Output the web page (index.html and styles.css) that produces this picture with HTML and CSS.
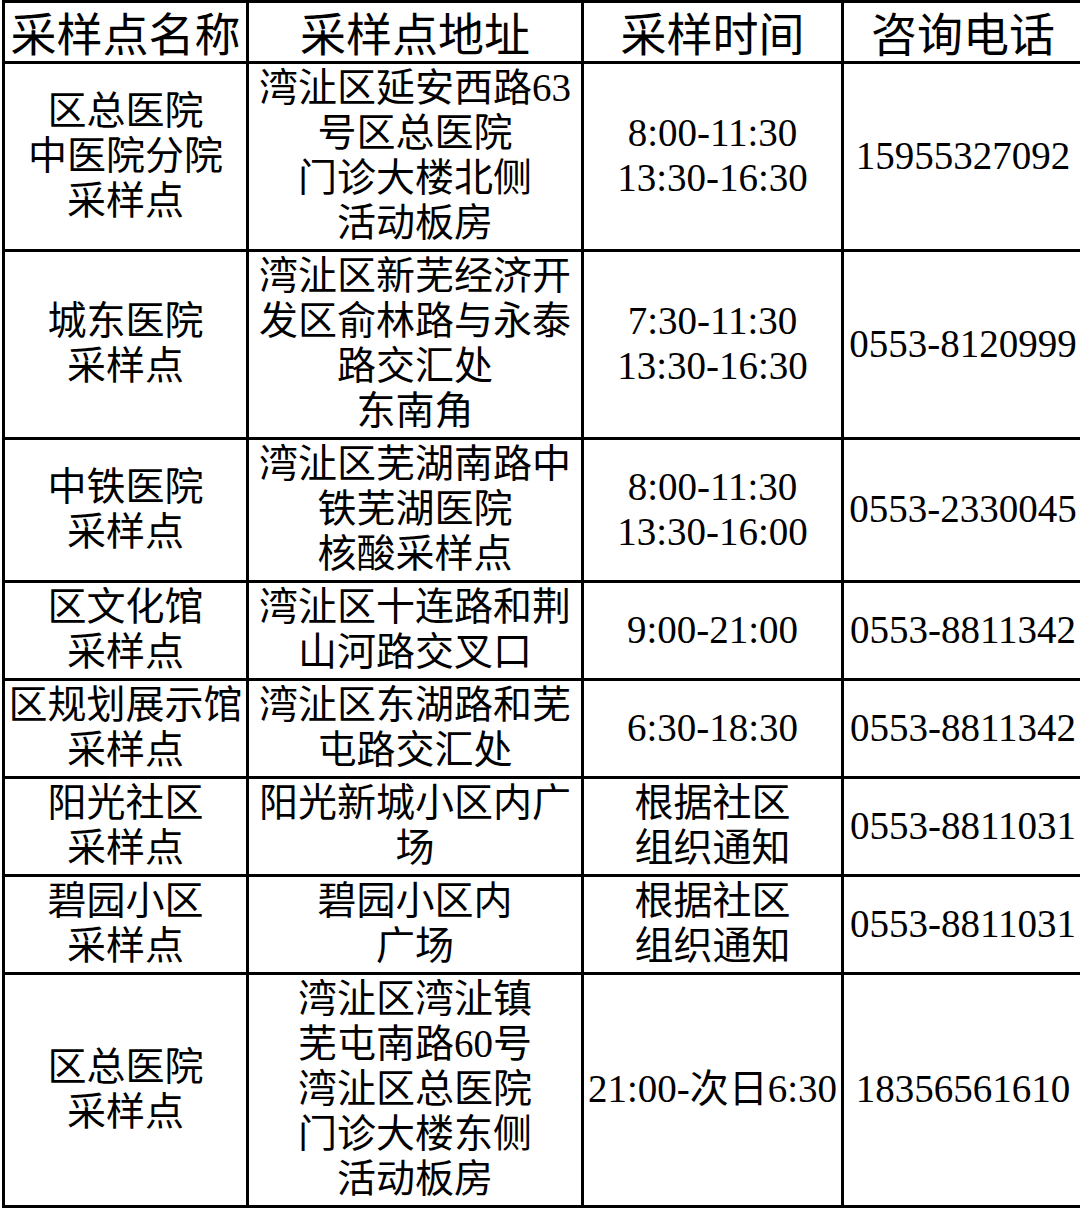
FILE: index.html
```html
<!DOCTYPE html>
<html lang="zh-CN">
<head>
<meta charset="utf-8">
<title>采样点</title>
<link rel="stylesheet" href="styles.css">
</head>
<body>
<table class="sites">
  <colgroup>
    <col class="c-name">
    <col class="c-addr">
    <col class="c-time">
    <col class="c-tel">
  </colgroup>
  <thead>
    <tr><th>采样点名称</th><th>采样点地址</th><th>采样时间</th><th>咨询电话</th></tr>
  </thead>
  <tbody>
    <tr>
      <td>区总医院<br>中医院分院<br>采样点</td>
      <td>湾沚区延安西路63<br>号区总医院<br>门诊大楼北侧<br>活动板房</td>
      <td>8:00-11:30<br>13:30-16:30</td>
      <td>15955327092</td>
    </tr>
    <tr>
      <td>城东医院<br>采样点</td>
      <td>湾沚区新芜经济开<br>发区俞林路与永泰<br>路交汇处<br>东南角</td>
      <td>7:30-11:30<br>13:30-16:30</td>
      <td>0553-8120999</td>
    </tr>
    <tr>
      <td>中铁医院<br>采样点</td>
      <td>湾沚区芜湖南路中<br>铁芜湖医院<br>核酸采样点</td>
      <td>8:00-11:30<br>13:30-16:00</td>
      <td>0553-2330045</td>
    </tr>
    <tr>
      <td>区文化馆<br>采样点</td>
      <td>湾沚区十连路和荆<br>山河路交叉口</td>
      <td>9:00-21:00</td>
      <td>0553-8811342</td>
    </tr>
    <tr>
      <td>区规划展示馆<br>采样点</td>
      <td>湾沚区东湖路和芜<br>屯路交汇处</td>
      <td>6:30-18:30</td>
      <td>0553-8811342</td>
    </tr>
    <tr>
      <td>阳光社区<br>采样点</td>
      <td>阳光新城小区内广<br>场</td>
      <td>根据社区<br>组织通知</td>
      <td>0553-8811031</td>
    </tr>
    <tr>
      <td>碧园小区<br>采样点</td>
      <td>碧园小区内<br>广场</td>
      <td>根据社区<br>组织通知</td>
      <td>0553-8811031</td>
    </tr>
    <tr>
      <td>区总医院<br>采样点</td>
      <td>湾沚区湾沚镇<br>芜屯南路60号<br>湾沚区总医院<br>门诊大楼东侧<br>活动板房</td>
      <td>21:00-次日6:30</td>
      <td>18356561610</td>
    </tr>
  </tbody>
</table>
</body>
</html>
```

FILE: styles.css
```css
html, body {
  margin: 0;
  padding: 0;
  background: #fff;
}

body {
  width: 1080px;
  height: 1209px;
  overflow: hidden;
}

.sites {
  border-collapse: collapse;
  table-layout: fixed;
  width: 1080px;
  margin: 0 0 0 2px;
  color: #000;
  font-family: "Liberation Serif", "Noto Sans CJK SC", serif;
}

.c-name { width: 244px; }
.c-addr { width: 335px; }
.c-time { width: 260px; }
.c-tel  { width: 241px; }

.sites th,
.sites td {
  border: 3px solid #000;
  text-align: center;
  vertical-align: middle;
  white-space: nowrap;
}

.sites th {
  font-family: "Noto Sans CJK SC", sans-serif;
  font-weight: normal;
  font-size: 46px;
  line-height: 56px;
  padding: 0 0 2px;
}

.sites td {
  font-size: 39px;
  line-height: 45px;
  padding: 1px 0 4px;
}
```
